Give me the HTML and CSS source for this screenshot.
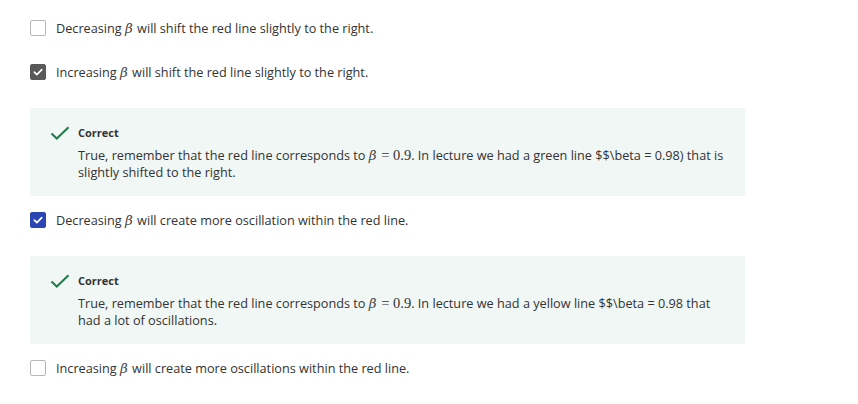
FILE: index.html
```html
<!DOCTYPE html>
<html>
<head>
<meta charset="utf-8">
<link rel="stylesheet" href="styles.css">
</head>
<body>
<div class="quiz">
  <div class="option first">
    <div class="row">
      <span class="cb"></span>
      <span class="label">Decreasing <i class="m">β</i> will shift the red line slightly to the right.</span>
    </div>
  </div>
  <div class="option">
    <div class="row">
      <span class="cb grey"><svg viewBox="0 0 16 16" width="16" height="16"><path d="M3.8 8.2 L6.7 11 L12.3 5.2" fill="none" stroke="#fff" stroke-width="1.9" stroke-linecap="round" stroke-linejoin="round"/></svg></span>
      <span class="label">Increasing <i class="m">β</i> will shift the red line slightly to the right.</span>
    </div>
    <div class="feedback">
      <svg class="tick" viewBox="0 0 20 14" width="20" height="14"><path d="M1.5 7.5 L6.8 12.5 L18.5 1.2" fill="none" stroke="#1e7d4a" stroke-width="2"/></svg>
      <div class="fb-text">
        <div class="fb-title">Correct</div>
        <div class="fb-body">True, remember that the red line corresponds to <span class="mm"><i class="m">β</i> = 0.9</span>. In lecture we had a green line $$\beta = 0.98) that is slightly shifted to the right.</div>
      </div>
    </div>
  </div>
  <div class="option after-fb">
    <div class="row">
      <span class="cb blue"><svg viewBox="0 0 16 16" width="16" height="16"><path d="M3.8 8.2 L6.7 11 L12.3 5.2" fill="none" stroke="#fff" stroke-width="1.9" stroke-linecap="round" stroke-linejoin="round"/></svg></span>
      <span class="label">Decreasing <i class="m">β</i> will create more oscillation within the red line.</span>
    </div>
    <div class="feedback">
      <svg class="tick" viewBox="0 0 20 14" width="20" height="14"><path d="M1.5 7.5 L6.8 12.5 L18.5 1.2" fill="none" stroke="#1e7d4a" stroke-width="2"/></svg>
      <div class="fb-text">
        <div class="fb-title">Correct</div>
        <div class="fb-body">True, remember that the red line corresponds to <span class="mm"><i class="m">β</i> = 0.9</span>. In lecture we had a yellow line $$\beta = 0.98 that had a lot of oscillations.</div>
      </div>
    </div>
  </div>
  <div class="option after-fb">
    <div class="row">
      <span class="cb"></span>
      <span class="label">Increasing <i class="m">β</i> will create more oscillations within the red line.</span>
    </div>
  </div>
</div>
</body>
</html>
```
FILE: styles.css
```css
html, body {
  margin: 0;
  padding: 0;
  background: #fff;
}
body {
  font-family: "Open Sans", "Liberation Sans", sans-serif;
  font-size: 12.7px;
  color: #333;
}
.quiz {
  width: 715px;
  padding-left: 30px;
  display: flex;
  flex-direction: column;
}
.option {
  padding-top: 20px;
}
.option.first {
  padding-top: 16px;
}
.option.after-fb {
  padding-top: 12px;
}
.row {
  display: flex;
  align-items: center;
  height: 24px;
}
.cb {
  width: 16px;
  height: 16px;
  box-sizing: border-box;
  border: 1px solid #b7b7b7;
  border-radius: 2px;
  background: #fff;
  flex: none;
  display: flex;
  align-items: center;
  justify-content: center;
}
.cb svg { display: block; }
.cb.grey {
  background: #595959;
  border-color: #595959;
}
.cb.blue {
  background: #2b46b3;
  border-color: #2b46b3;
}
.label {
  margin-left: 10px;
  line-height: 18px;
}
.m {
  font-family: "DejaVu Serif", "Liberation Serif", serif;
  font-style: italic;
  font-size: 13.5px;
  line-height: 1;
  padding-right: 1px;
  color: #444;
}
.mm {
  font-family: "Liberation Serif", serif;
  font-size: 14.5px;
  line-height: 1;
}
.mm .m {
  font-size: 13.5px;
}
.feedback {
  margin-top: 24px;
  background: #f0f7f5;
  display: flex;
  align-items: flex-start;
  padding: 17px 17px 13px 20px;
  height: 88px;
  box-sizing: border-box;
}
.tick {
  flex: none;
  margin-top: 1px;
}
.fb-text {
  margin-left: 8px;
}
.fb-title {
  font-weight: 700;
  font-size: 11px;
  line-height: 16px;
  color: #333;
  margin-bottom: 6px;
}
.fb-body {
  line-height: 17px;
}
```
